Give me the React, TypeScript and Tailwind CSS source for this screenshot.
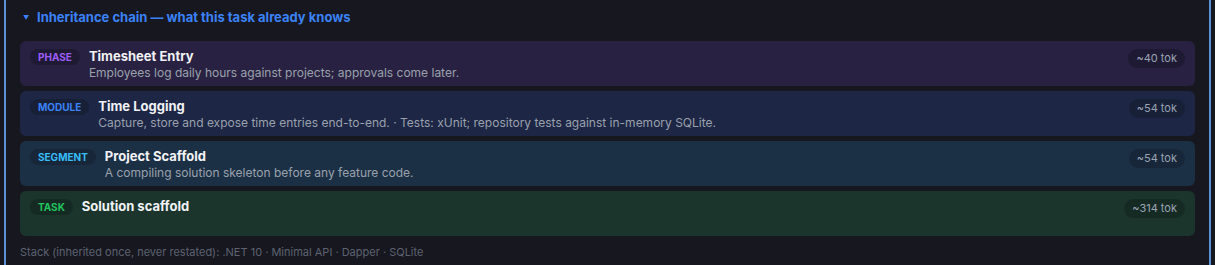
import React from "react";

type Level = {
  kind: string;
  title: string;
  desc?: string;
  tok: string;
  card: string;
  badge: string;
  badgeText: string;
};

const levels: Level[] = [
  {
    kind: "PHASE",
    title: "Timesheet Entry",
    desc: "Employees log daily hours against projects; approvals come later.",
    tok: "~40 tok",
    card: "bg-[#292141]",
    badge: "bg-[#1f1a33]",
    badgeText: "text-[#9c5cf6]",
  },
  {
    kind: "MODULE",
    title: "Time Logging",
    desc: "Capture, store and expose time entries end-to-end. · Tests: xUnit; repository tests against in-memory SQLite.",
    tok: "~54 tok",
    card: "bg-[#1d2645]",
    badge: "bg-[#172037]",
    badgeText: "text-[#3b82f6]",
  },
  {
    kind: "SEGMENT",
    title: "Project Scaffold",
    desc: "A compiling solution skeleton before any feature code.",
    tok: "~54 tok",
    card: "bg-[#1c3045]",
    badge: "bg-[#172638]",
    badgeText: "text-[#38bdf8]",
  },
  {
    kind: "TASK",
    title: "Solution scaffold",
    tok: "~314 tok",
    card: "bg-[#1b352d]",
    badge: "bg-[#162a24]",
    badgeText: "text-[#22c55e]",
  },
];

export default function App() {
  return (
    <div className="h-[265px] overflow-hidden bg-[#17171f] px-[4px] font-['Inter','Noto_Sans',sans-serif]">
      <section className="h-full border-x-2 border-[#5b8fd6] px-[14px] pt-[8px]">
        <div className="flex h-[20px] items-center text-[13px] font-bold text-[#3b82f6]">
          <span className="w-[17px] pl-[3px] text-[6px] leading-none">▼</span>
          <span>Inheritance chain — what this task already knows</span>
        </div>

        <div className="mt-[13px] flex flex-col gap-[5px]">
          {levels.map((l) => (
            <div
              key={l.kind}
              className={`flex h-[45px] items-start justify-between rounded-[6px] pl-[10px] pr-[10px] pt-[8px] ${l.card}`}
            >
              <div className="flex items-start gap-[9px]">
                <span
                  className={`rounded-full px-[8px] py-[3px] text-[10px] font-bold leading-[10px] ${l.badge} ${l.badgeText}`}
                >
                  {l.kind}
                </span>
                <div className="-mt-[2px]">
                  <div className="text-[13px] font-bold leading-[18px] text-[#f1f2f5]">
                    {l.title}
                  </div>
                  {l.desc && (
                    <div className="text-[12px] leading-[16px] text-[#9aa1ad]">
                      {l.desc}
                    </div>
                  )}
                </div>
              </div>
              <span className={`rounded-full px-[8px] py-[2px] text-[11px] leading-[15px] text-[#9aa4b4] ${l.badge}`}>
                {l.tok}
              </span>
            </div>
          ))}
        </div>

        <div className="mt-[8px] text-[11px] text-[#5c6270]">
          Stack (inherited once, never restated): .NET 10 · Minimal API · Dapper · SQLite
        </div>
      </section>
    </div>
  );
}
